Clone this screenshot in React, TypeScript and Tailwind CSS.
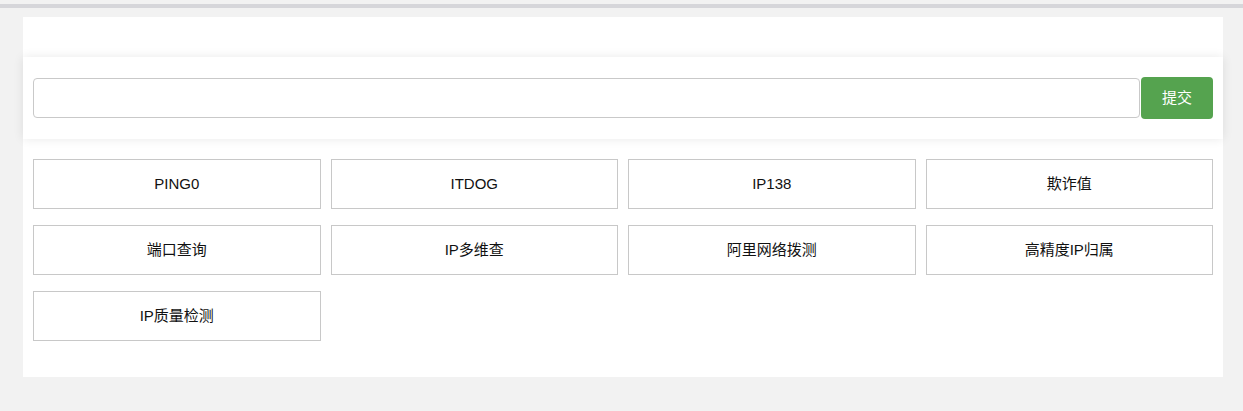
import React from "react";

const items = [
  "PING0",
  "ITDOG",
  "IP138",
  "欺诈值",
  "端口查询",
  "IP多维查",
  "阿里网络拨测",
  "高精度IP归属",
  "IP质量检测",
];

export default function App() {
  return (
    <div
      className="min-h-[411px] bg-[#f2f2f2]"
      style={{ fontFamily: '"Liberation Sans", Arial, "Noto Sans CJK SC", sans-serif' }}
    >
      <div className="h-[4px] bg-[#f2f2f2]" />
      <div className="h-[4px] bg-[#d6d6da]" />
      <div className="pl-[23px] pr-[20px] pt-[9px]">
        <div className="bg-white pt-[40px] pb-[36px]">
          <div className="flex items-center bg-white px-[10px] py-[20px] shadow-[0_0_10px_rgba(0,0,0,0.09)]">
            <input
              type="text"
              className="h-[40px] flex-1 rounded-[4px] border border-[#c9c9c9] bg-white px-3 text-[15px] outline-none"
            />
            <button className="ml-px h-[42px] w-[72px] rounded-[4px] bg-[#55a34f] text-[15px] text-white">
              提交
            </button>
          </div>
          <div className="mt-[20px] grid grid-cols-4 gap-x-[10px] gap-y-[16px] px-[10px]">
            {items.map((t) => (
              <div
                key={t}
                className="flex h-[50px] items-center justify-center border border-[#c8c8c8] bg-white text-[15px] text-[#111]"
              >
                {t}
              </div>
            ))}
          </div>
        </div>
      </div>
    </div>
  );
}
